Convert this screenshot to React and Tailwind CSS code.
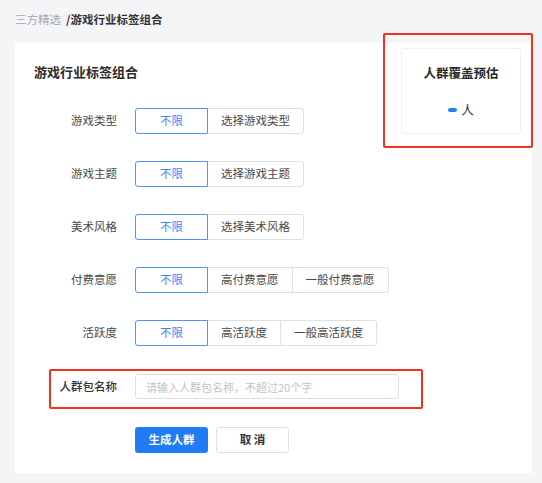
import React from 'react';

const rows = [
  { label: '游戏类型', options: ['选择游戏类型'] },
  { label: '游戏主题', options: ['选择游戏主题'] },
  { label: '美术风格', options: ['选择美术风格'] },
  { label: '付费意愿', options: ['高付费意愿', '一般付费意愿'] },
  { label: '活跃度', options: ['高活跃度', '一般高活跃度'] },
];

const OptionGroup = ({ options }) => (
  <div className="flex h-[26px]">
    <button className="w-[73px] h-full rounded-l-[3px] border border-[#4f93f7] text-[#3a86f4] bg-white text-[11.5px] relative z-10">
      不限
    </button>
    {options.map((opt, i) => (
      <button
        key={opt}
        className={`h-full px-[13px] border border-[#dcdfe4] -ml-px text-[#4a4a4a] bg-white text-[11.5px] ${
          i === options.length - 1 ? 'rounded-r-[3px]' : ''
        }`}
      >
        {opt}
      </button>
    ))}
  </div>
);

export default function App() {
  return (
    <div
      className="w-[542px] h-[483px] bg-[#f4f5f7] overflow-hidden"
      style={{ fontFamily: '"Noto Sans CJK SC", "Noto Sans", sans-serif' }}
    >
      {/* Breadcrumb */}
      <div className="h-[43px] pl-[15px] flex items-center text-[11.5px] pb-[3px]">
        <span className="text-[#a4a8ae]">三方精选</span>
        <span className="text-[#333] font-bold ml-[5px]">/游戏行业标签组合</span>
      </div>

      {/* Card */}
      <div className="relative ml-[15px] mr-[10px] h-[430px] bg-white pt-[20px]">
        <h2 className="pl-[19px] text-[13px] font-bold text-[#2b2b2b] leading-[18px]">游戏行业标签组合</h2>

        {/* Estimate box */}
        <div className="absolute top-[5px] right-[11px] w-[120px] h-[86px]">
          <div className="absolute -top-[15px] -left-[18px] -right-[12px] -bottom-[14px] border-2 border-[#f2321f] rounded-[2px]" />
          <div className="w-full h-full border border-[#eef0f2] rounded-[3px] bg-white flex flex-col items-center">
            <div className="mt-[15px] text-[12.5px] font-bold text-[#2b2b2b]">人群覆盖预估</div>
            <div className="mt-[18px] flex items-center text-[12.5px] text-[#333]">
              <span className="w-[9px] h-[4px] rounded-full bg-[#2f7ef6] mr-[4px]" />
              人
            </div>
          </div>
        </div>

        {/* Rows */}
        <div className="mt-[27px] flex flex-col gap-[27px]">
          {rows.map(row => (
            <div key={row.label} className="flex items-center">
              <div className="w-[102px] text-right text-[11.5px] text-[#4a4a4a]">{row.label}</div>
              <div className="ml-[18px]">
                <OptionGroup options={row.options} />
              </div>
            </div>
          ))}
        </div>

        {/* Name input */}
        <div className="relative mt-[28px] flex items-center h-[25px]">
          <div className="absolute -top-[5px] -bottom-[10px] left-[34px] w-[374px] border-2 border-[#f2321f] rounded-[2px]" />
          <div className="w-[102px] text-right text-[11.5px] font-medium text-[#333]">人群包名称</div>
          <input
            className="ml-[18px] w-[264px] h-[25px] border border-[#dcdfe4] rounded-[3px] px-[10px] text-[11px] placeholder-[#c0c3c8] outline-none"
            placeholder="请输入人群包名称，不超过20个字"
          />
        </div>

        {/* Actions */}
        <div className="mt-[28px] flex pl-[120px] gap-[8px]">
          <button className="w-[73px] h-[26px] rounded-[3px] bg-[#1f7cf6] text-white text-[11.5px] font-semibold">生成人群</button>
          <button className="w-[73px] h-[26px] rounded-[3px] border border-[#dcdfe4] bg-white text-[#333] text-[11.5px] font-semibold">取 消</button>
        </div>
      </div>
    </div>
  );
}
